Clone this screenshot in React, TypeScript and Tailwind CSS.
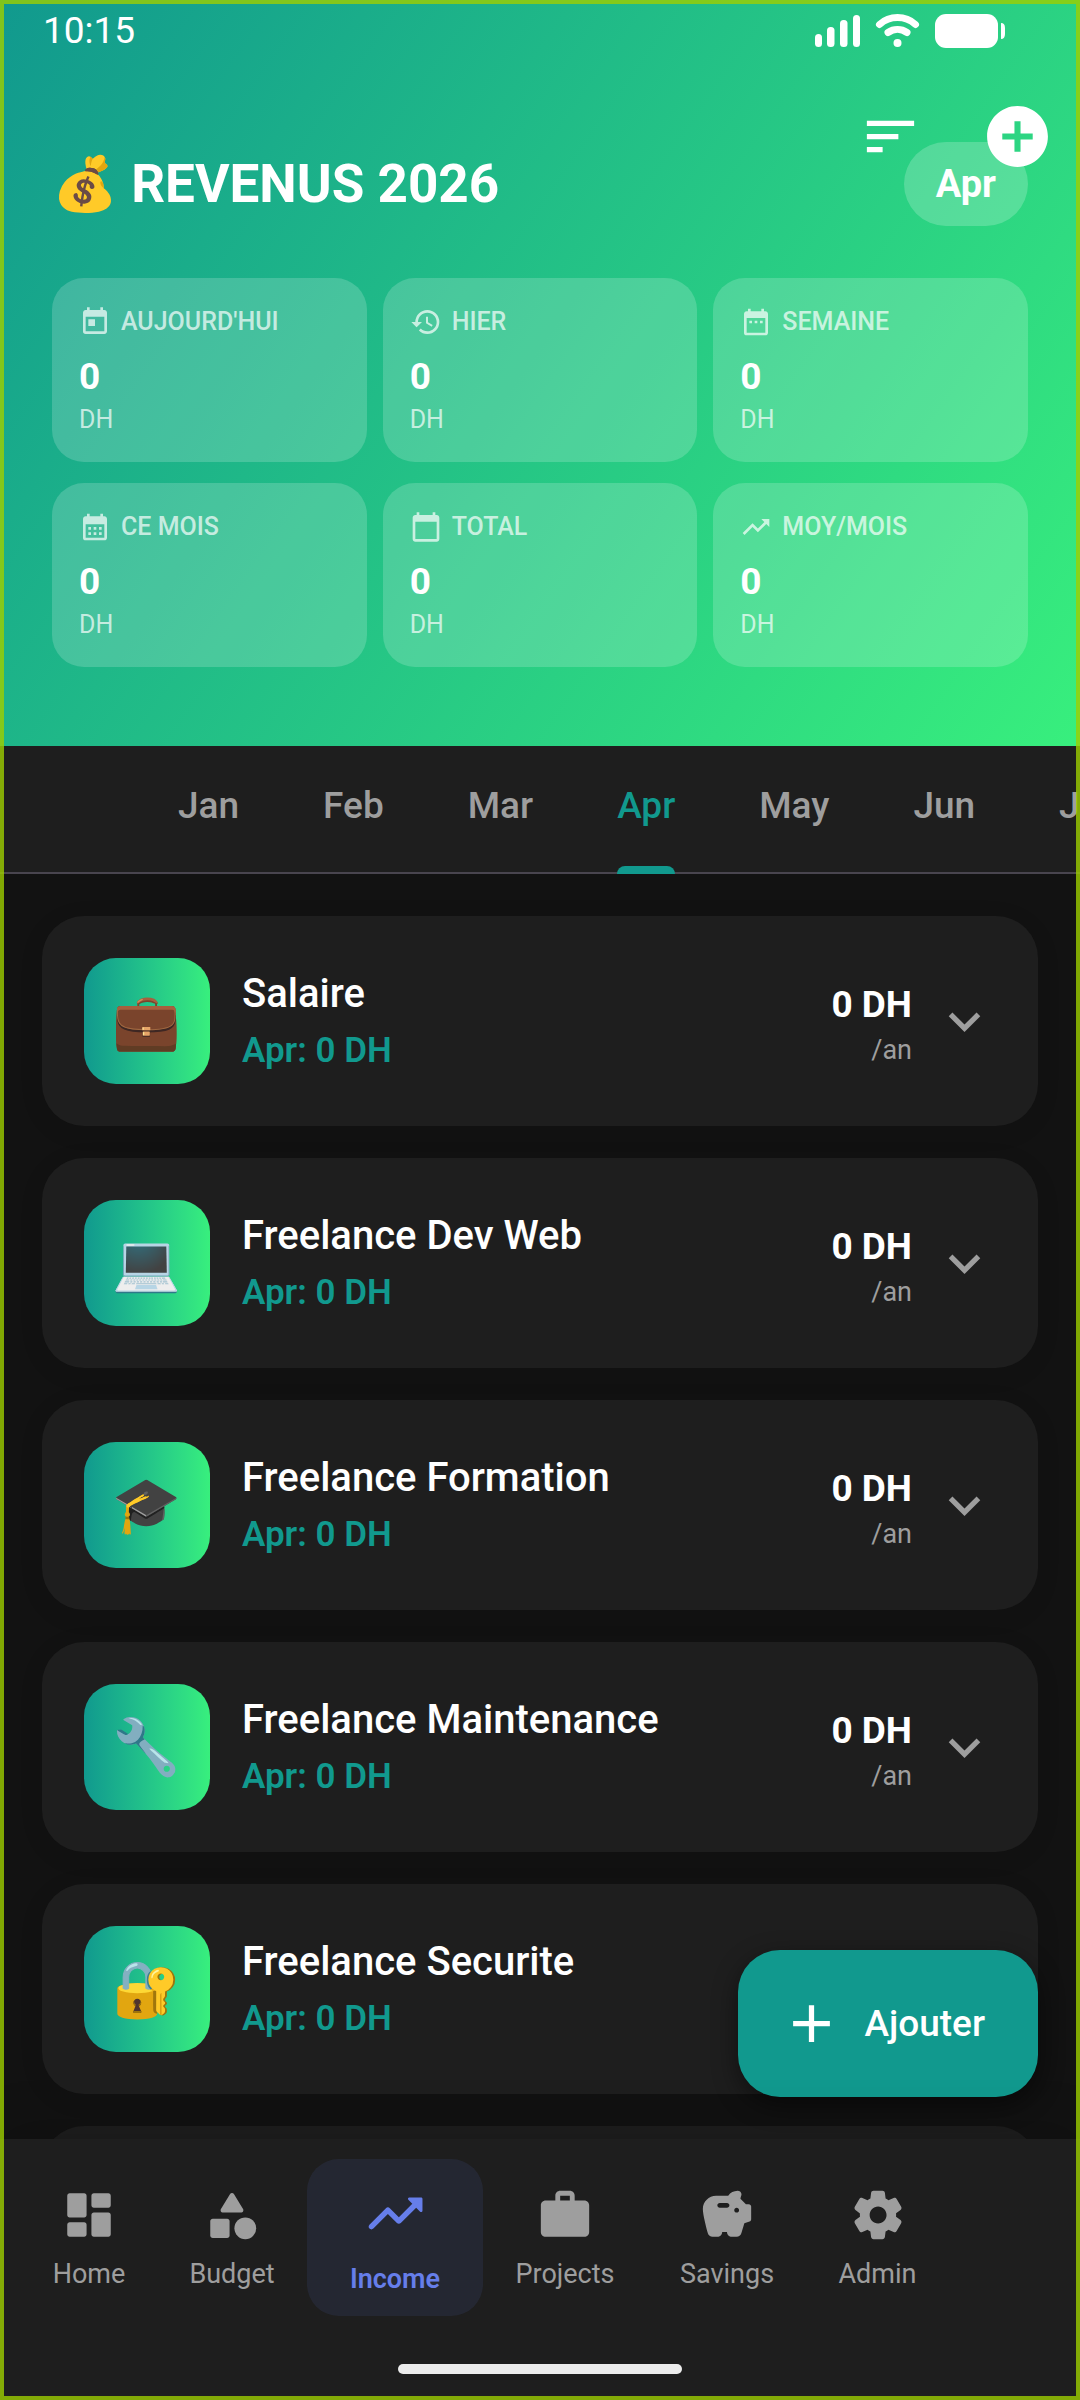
import React from "react";
import {
  MdAdd,
  MdAddCircle,
  MdCalendarMonth,
  MdCalendarToday,
  MdDateRange,
  MdExpandMore,
  MdHistory,
  MdSort,
  MdToday,
  MdTrendingUp,
  MdWork,
} from "react-icons/md";

type IconType = React.ComponentType<{ className?: string }>;

const DashboardIcon: IconType = ({ className }) => (
  <svg viewBox="0 0 24 24" fill="currentColor" className={className} aria-hidden="true">
    <path d="M4 13h6c.55 0 1-.45 1-1V4c0-.55-.45-1-1-1H4c-.55 0-1 .45-1 1v8c0 .55.45 1 1 1zm0 8h6c.55 0 1-.45 1-1v-4c0-.55-.45-1-1-1H4c-.55 0-1 .45-1 1v4c0 .55.45 1 1 1zm10 0h6c.55 0 1-.45 1-1v-8c0-.55-.45-1-1-1h-6c-.55 0-1 .45-1 1v8c0 .55.45 1 1 1zM13 4v4c0 .55.45 1 1 1h6c.55 0 1-.45 1-1V4c0-.55-.45-1-1-1h-6c-.55 0-1 .45-1 1z" />
  </svg>
);

const CategoryIcon: IconType = ({ className }) => (
  <svg viewBox="0 0 24 24" fill="currentColor" className={className} aria-hidden="true">
    <path d="M11.15 3.4L7.43 9.48c-.41.66.07 1.52.85 1.52h7.43c.78 0 1.26-.86.85-1.52L12.85 3.4c-.39-.64-1.31-.64-1.7 0z" />
    <circle cx="17.5" cy="17.5" r="4.5" />
    <path d="M4 21.5h6c.55 0 1-.45 1-1v-6c0-.55-.45-1-1-1H4c-.55 0-1 .45-1 1v6c0 .55.45 1 1 1z" />
  </svg>
);

const TrendingIcon: IconType = ({ className }) => (
  <svg viewBox="0 0 24 24" fill="currentColor" className={className} aria-hidden="true">
    <path d="M16.85 6.85l1.44 1.44-4.88 4.88-3.29-3.29c-.39-.39-1.02-.39-1.41 0l-6 6.01c-.39.39-.39 1.02 0 1.41.39.39 1.02.39 1.41 0L9.41 12l3.29 3.29c.39.39 1.02.39 1.41 0l5.59-5.58 1.44 1.44c.31.31.85.09.85-.35V6.5c.01-.28-.21-.5-.49-.5h-4.29c-.45 0-.67.54-.36.85z" />
  </svg>
);

const SavingsIcon: IconType = ({ className }) => (
  <svg viewBox="0 0 24 24" fill="currentColor" className={className} aria-hidden="true">
    <path d="M19.83 7.5l-2.27-2.27c.07-.42.18-.81.32-1.15.11-.26.15-.56.09-.87C17.84 2.49 17.14 1.99 16.4 2c-1.59.03-3 .81-3.9 2h-5C4.46 4 2 6.46 2 9.5c0 2.25 1.37 7.48 2.08 10.04.24.86 1.03 1.46 1.93 1.46H8c1.1 0 2-.9 2-2h2c0 1.1.9 2 2 2h2.01c.88 0 1.66-.58 1.92-1.43l1.25-4.16 2.14-.72c.41-.14.68-.52.68-.95V8.5c0-.55-.45-1-1-1h-1.17zM12 9H9c-.55 0-1-.45-1-1s.45-1 1-1h3c.55 0 1 .45 1 1s-.45 1-1 1zm4 2c-.55 0-1-.45-1-1s.45-1 1-1 1 .45 1 1-.45 1-1 1z" />
  </svg>
);

const SettingsIcon: IconType = ({ className }) => (
  <svg viewBox="0 0 24 24" fill="currentColor" className={className} aria-hidden="true">
    <path d="M19.5 12c0-.23-.01-.45-.03-.68l1.86-1.41c.4-.3.51-.86.26-1.3l-1.87-3.23c-.25-.44-.79-.62-1.25-.42l-2.15.91c-.37-.26-.76-.49-1.17-.68l-.29-2.31C14.8 2.38 14.37 2 13.87 2h-3.73c-.51 0-.94.38-1 .88l-.29 2.31c-.41.19-.8.42-1.17.68l-2.15-.91c-.46-.2-1-.02-1.25.42L2.41 8.62c-.25.44-.14.99.26 1.3l1.86 1.41c-.02.22-.03.44-.03.67s.01.45.03.68l-1.86 1.41c-.4.3-.51.86-.26 1.3l1.87 3.23c.25.44.79.62 1.25.42l2.15-.91c.37.26.76.49 1.17.68l.29 2.31c.06.5.49.88.99.88h3.73c.5 0 .93-.38.99-.88l.29-2.31c.41-.19.8-.42 1.17-.68l2.15.91c.46.2 1 .02 1.25-.42l1.87-3.23c.25-.44.14-.99-.26-1.3l-1.86-1.41c.03-.23.04-.45.04-.68zm-7.46 3.5c-1.93 0-3.5-1.57-3.5-3.5s1.57-3.5 3.5-3.5 3.5 1.57 3.5 3.5-1.57 3.5-3.5 3.5z" />
  </svg>
);

const stats: { label: string; Icon: IconType }[] = [
  { label: "AUJOURD'HUI", Icon: MdToday },
  { label: "HIER", Icon: MdHistory },
  { label: "SEMAINE", Icon: MdDateRange },
  { label: "CE MOIS", Icon: MdCalendarMonth },
  { label: "TOTAL", Icon: MdCalendarToday },
  { label: "MOY/MOIS", Icon: MdTrendingUp },
];

const months = ["Jan", "Feb", "Mar", "Apr", "May", "Jun", "Jul"];

const incomes = [
  { name: "Salaire", emoji: "💼" },
  { name: "Freelance Dev Web", emoji: "💻" },
  { name: "Freelance Formation", emoji: "🎓" },
  { name: "Freelance Maintenance", emoji: "🔧" },
  { name: "Freelance Securite", emoji: "🔐" },
];

const navItems: { label: string; Icon: IconType; width: string; active?: boolean }[] = [
  { label: "Home", Icon: DashboardIcon, width: "w-[136px]" },
  { label: "Budget", Icon: CategoryIcon, width: "w-[150px]" },
  { label: "Income", Icon: TrendingIcon, width: "w-[176px]", active: true },
  { label: "Projects", Icon: MdWork, width: "w-[164px]" },
  { label: "Savings", Icon: SavingsIcon, width: "w-[160px]" },
  { label: "Admin", Icon: SettingsIcon, width: "w-[141px]" },
];

function StatusBar() {
  return (
    <div className="flex h-[62px] items-center justify-between pl-[43px] pr-[75px]">
      <span className="text-[37px] leading-[60px]">10:15</span>
      <svg viewBox="0 0 190 34" className="h-[34px] w-[190px]" fill="currentColor" aria-hidden="true">
        <rect x="0" y="20" width="7" height="13" rx="3.5" />
        <rect x="12" y="13" width="7.5" height="20" rx="3.5" />
        <rect x="25" y="6" width="7.5" height="27" rx="3.5" />
        <rect x="38" y="1" width="7" height="32" rx="3.5" />
        <g fill="none" stroke="currentColor" strokeWidth="7" strokeLinecap="round">
          <path d="M64.5 10.5a27 27 0 0 1 36 0" />
          <path d="M73 18.5a17 17 0 0 1 19 0" />
        </g>
        <circle cx="82.5" cy="29" r="4" />
        <rect x="120" y="0" width="63" height="34" rx="11" />
        <path d="M186 9q4 0 4 5v6q0 5-4 5z" />
      </svg>
    </div>
  );
}

function StatCard({ label, Icon }: { label: string; Icon: IconType }) {
  return (
    <div className="rounded-[32px] bg-white/18 px-[27px] py-[26px]">
      <div className="flex h-9 items-center gap-[10px] text-white/70">
        <Icon className="size-8" />
        <span className="text-[25px] font-medium leading-8">{label}</span>
      </div>
      <div className="mt-[14px] text-[37px] font-bold leading-[46px]">0</div>
      <div className="mt-1 text-[25px] leading-8 text-white/70">DH</div>
    </div>
  );
}

function IncomeCard({ name, emoji }: { name: string; emoji: string }) {
  return (
    <li>
      <button
        type="button"
        className="flex h-[210px] w-full items-center rounded-[42px] bg-[#1e1e1e] px-[42px] text-left shadow-[0_5px_26px_rgba(0,0,0,0.08)]"
      >
        <span className="flex size-[126px] shrink-0 items-center justify-center rounded-[32px] bg-linear-to-r from-[#11998e] to-[#38ef7d] text-[55px] leading-none">
          {emoji}
        </span>
        <span className="ml-8 flex flex-1 flex-col gap-[11px]">
          <span className="text-[40px] font-medium leading-[48px]">{name}</span>
          <span className="text-[35px] font-semibold leading-[44px] text-[#11998e]">Apr: 0 DH</span>
        </span>
        <span className="mr-[21px] flex flex-col items-end pt-[7px]">
          <span className="text-[37px] font-bold leading-[50px]">0 DH</span>
          <span className="text-[27px] leading-10 text-[#9e9e9e]">/an</span>
        </span>
        <MdExpandMore className="size-[63px] text-[#9e9e9e]" />
      </button>
    </li>
  );
}

export default function App() {
  return (
    <div className="relative flex h-screen flex-col overflow-hidden bg-[#121212] font-['Roboto','Noto_Color_Emoji',sans-serif] text-white">
      <header className="bg-[linear-gradient(125deg,#11998e,#38ef7d)] pb-[79px]">
        <StatusBar />
        <div className="relative mt-20 flex items-center justify-between px-[52px]">
          <h1 className="text-[53px] font-bold leading-[84px]">💰 REVENUS 2026</h1>
          <span className="rounded-full bg-white/20 px-8 text-[38px] font-bold leading-[84px]">Apr</span>
          <div className="absolute right-[26px] top-[-42px] flex items-center gap-[59px]">
            <button type="button" aria-label="Trier">
              <MdSort className="size-[63px]" />
            </button>
            <button type="button" aria-label="Ajouter un revenu">
              <MdAddCircle className="size-[73px]" />
            </button>
          </div>
        </div>
        <div className="mt-[52px] grid grid-cols-3 gap-x-4 gap-y-[21px] px-[52px]">
          {stats.map((s) => (
            <StatCard key={s.label} {...s} />
          ))}
        </div>
      </header>

      <div
        role="tablist"
        className="flex h-32 shrink-0 gap-[84px] overflow-hidden bg-[#1e1e1e] pl-[178px] shadow-[inset_0_-2px_0_#49454f]"
      >
        {months.map((m) => (
          <button
            key={m}
            type="button"
            role="tab"
            aria-selected={m === "Apr"}
            className={
              m === "Apr"
                ? "flex shrink-0 flex-col text-[37px] font-medium leading-[120px] text-[#11998e]"
                : "flex shrink-0 flex-col text-[37px] font-medium leading-[120px] text-[#9e9e9e]"
            }
          >
            {m}
            {m === "Apr" && <span className="h-2 w-full rounded-t-lg bg-[#11998e]" />}
          </button>
        ))}
      </div>

      <main className="relative min-h-0 flex-1">
        <ul className="flex h-full flex-col gap-8 overflow-hidden px-[42px] pt-[42px]">
          {incomes.map((i) => (
            <IncomeCard key={i.name} {...i} />
          ))}
          <li className="h-[210px] shrink-0 rounded-[42px] bg-[#1e1e1e]" aria-hidden="true" />
        </ul>
        <button
          type="button"
          className="absolute bottom-[42px] right-[42px] flex h-[147px] items-center gap-[21px] rounded-[42px] bg-[#11998e] pl-[42px] pr-[53px] text-[37px] font-medium shadow-[0_8px_26px_rgba(0,0,0,0.45)]"
        >
          <MdAdd className="size-[63px]" />
          Ajouter
        </button>
      </main>

      <nav className="relative shrink-0 bg-[#1e1e1e] pb-[26px] pt-5 shadow-[0_-5px_52px_rgba(0,0,0,0.2)]">
        <div className="flex pl-[21px]">
          {navItems.map(({ label, Icon, width, active }) => (
            <a
              key={label}
              href={"#" + label.toLowerCase()}
              aria-current={active ? "page" : undefined}
              className={
                width +
                (active
                  ? " flex h-[157px] flex-col items-center justify-center gap-4 rounded-[32px] bg-[#667eea]/10 text-[27px] font-semibold leading-8 text-[#667eea]"
                  : " flex h-[157px] flex-col items-center justify-center gap-[14px] text-[27px] leading-8 text-[#9e9e9e]")
              }
            >
              <Icon className={active ? "size-[66px]" : "size-[58px]"} />
              {label}
            </a>
          ))}
        </div>
        <div className="mx-auto mt-12 h-[10px] w-[284px] rounded-full bg-[#ececec]" />
      </nav>

      <div className="pointer-events-none absolute inset-0 border-4 border-[#9ece00]/80" />
    </div>
  );
}
